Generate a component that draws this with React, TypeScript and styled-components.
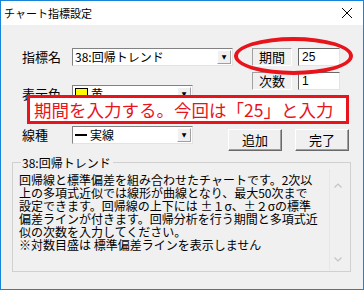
import React from 'react';
import styled, { createGlobalStyle } from 'styled-components';

const GlobalStyle = createGlobalStyle`
    html, body {
        margin: 0;
        padding: 0;
        background: #ffffff;
    }
    body {
        font-family: "Noto Sans CJK JP", "DejaVu Sans", sans-serif;
        color: #000;
    }
`;

const descLines = [
    '回帰線と標準偏差を組み合わせたチャートです。2次以',
    '上の多項式近似では線形が曲線となり、最大50次まで',
    '設定できます。回帰線の上下には ±１σ、±２σの標準',
    '偏差ラインが付きます。回帰分析を行う期間と多項式近',
    '似の次数を入力してください。',
    '※対数目盛は 標準偏差ラインを表示しません',
];

export default function App() {
    return (
        <>
            <GlobalStyle />
            <Window lang="ja">
                <TitleBar>
                    <span>チャート指標設定</span>
                    <CloseIcon width="12" height="12" viewBox="0 0 12 12">
                        <path d="M1 1 L11 11 M11 1 L1 11" stroke="#000" strokeWidth="1" />
                    </CloseIcon>
                </TitleBar>

                <Body>
                    <TopBand>
                        <LeftCol>
                            <FieldRow>
                                <Label>指標名</Label>
                                <Combo $width={161}>
                                    <ComboText>38:回帰トレンド</ComboText>
                                    <DropButton>▼</DropButton>
                                </Combo>
                            </FieldRow>
                            <FieldRow $gap={19}>
                                <Label>表示色</Label>
                                <Combo $width={121}>
                                    <ComboText>
                                        <Swatch />黄
                                    </ComboText>
                                    <DropButton>▼</DropButton>
                                </Combo>
                            </FieldRow>
                        </LeftCol>
                        <RightCol>
                            <FieldRow>
                                <StaticBox>期間</StaticBox>
                                <TextBox>25</TextBox>
                            </FieldRow>
                            <FieldRow $gap={6}>
                                <StaticBox>次数</StaticBox>
                                <TextBox>1</TextBox>
                            </FieldRow>
                        </RightCol>
                    </TopBand>

                    <MidBand>
                        <FieldRow>
                            <Label>線種</Label>
                            <Combo $width={121}>
                                <ComboText>
                                    <LineSample />実線
                                </ComboText>
                                <DropButton>▼</DropButton>
                            </Combo>
                        </FieldRow>
                        <Buttons>
                            <PushButton>追加</PushButton>
                            <PushButton>完了</PushButton>
                        </Buttons>
                    </MidBand>

                    <Group>
                        <Legend>38:回帰トレンド</Legend>
                        <DescArea>
                            <DescText>
                                {descLines.map((l, i) => (
                                    <div key={i}>{l}</div>
                                ))}
                            </DescText>
                            <ScrollTrack>
                                <Chevron viewBox="0 0 8 5" width="8" height="5">
                                    <path d="M0.5 4.5 L4 1 L7.5 4.5" fill="none" stroke="#c4c4c4" strokeWidth="1.2" />
                                </Chevron>
                                <Chevron viewBox="0 0 8 5" width="8" height="5">
                                    <path d="M0.5 0.5 L4 4 L7.5 0.5" fill="none" stroke="#c4c4c4" strokeWidth="1.2" />
                                </Chevron>
                            </ScrollTrack>
                        </DescArea>
                    </Group>

                    {/* annotation overlays */}
                    <Ellipse />
                    <Callout>期間を入力する。今回は「25」と入力</Callout>
                </Body>
            </Window>
        </>
    );
}

const Window = styled.div`
    position: relative;
    width: 364px;
    height: 290px;
    box-sizing: border-box;
    border: 1px solid #1883d7;
    display: flex;
    flex-direction: column;
    overflow: hidden;
`;

const TitleBar = styled.div`
    height: 24px;
    background: #ffffff;
    display: flex;
    align-items: center;
    justify-content: space-between;
    padding: 0 10px 0 3px;
    font-size: 11px;
    flex-shrink: 0;
`;

const CloseIcon = styled.svg`
    display: block;
`;

const Body = styled.div`
    position: relative;
    flex: 1;
    background: #f0f0f0;
    padding: 23px 0 0 21px;
    font-size: 13px;
`;

const TopBand = styled.div`
    display: flex;
    gap: 19px;
`;

const LeftCol = styled.div`
    display: flex;
    flex-direction: column;
`;

const RightCol = styled.div`
    display: flex;
    flex-direction: column;
`;

const FieldRow = styled.div<{ $gap?: number }>`
    display: flex;
    align-items: center;
    height: 18px;
    margin-top: ${(p) => p.$gap || 0}px;
    gap: 6px;
`;

const Label = styled.div`
    width: 44px;
    font-size: 13px;
    line-height: 18px;
    white-space: nowrap;
`;

const Combo = styled.div<{ $width: number }>`
    width: ${(p) => p.$width}px;
    height: 18px;
    box-sizing: border-box;
    background: #fff;
    border: 1px solid;
    border-color: #828282 #e3e3e3 #e3e3e3 #828282;
    display: flex;
    align-items: center;
    justify-content: space-between;
`;

const ComboText = styled.div`
    display: flex;
    align-items: center;
    gap: 3px;
    padding-left: 2px;
    font-size: 12px;
    line-height: 16px;
    white-space: nowrap;
`;

const DropButton = styled.div`
    width: 14px;
    height: 14px;
    box-sizing: border-box;
    margin-right: 1px;
    background: #f0f0f0;
    border: 1px solid;
    border-color: #ffffff #a0a0a0 #a0a0a0 #ffffff;
    font-size: 6px;
    line-height: 12px;
    text-align: center;
    font-family: "DejaVu Sans", sans-serif;
`;

const Swatch = styled.span`
    display: inline-block;
    width: 11px;
    height: 11px;
    background: #ffff00;
    border: 1px solid #000;
`;

const LineSample = styled.span`
    display: inline-block;
    width: 12px;
    height: 2px;
    background: #000;
`;

const StaticBox = styled.div`
    width: 40px;
    height: 18px;
    box-sizing: border-box;
    border: 1px solid;
    border-color: #a0a0a0 #ffffff #ffffff #a0a0a0;
    text-align: center;
    font-size: 13px;
    line-height: 16px;
`;

const TextBox = styled.div`
    width: 42px;
    height: 18px;
    box-sizing: border-box;
    background: #fff;
    border: 1px solid;
    border-color: #696969 #e3e3e3 #e3e3e3 #696969;
    padding-left: 3px;
    font-family: "Liberation Sans", sans-serif;
    font-size: 12px;
    line-height: 16px;
`;

const MidBand = styled.div`
    display: flex;
    align-items: flex-start;
    gap: 35px;
    margin-top: 23px;
`;

const Buttons = styled.div`
    display: flex;
    gap: 13px;
    margin-top: 3px;
`;

const PushButton = styled.div`
    width: 54px;
    height: 22px;
    box-sizing: border-box;
    background: #f0f0f0;
    border: 1px solid;
    border-color: #ffffff #696969 #696969 #ffffff;
    box-shadow: inset -1px -1px 0 #a0a0a0;
    text-align: center;
    font-size: 13px;
    line-height: 20px;
`;

const Group = styled.fieldset`
    margin: 5px 0 0 -10px;
    width: 339px;
    height: 116px;
    box-sizing: border-box;
    border: 1px solid #d0d0d0;
    border-radius: 0;
    padding: 0 4px 3px 6px;
`;

const Legend = styled.legend`
    padding: 0 2px 0 1px;
    margin-left: 2px;
    font-size: 12px;
    line-height: 13px;
`;

const DescArea = styled.div`
    display: flex;
    height: 101px;
`;

const DescText = styled.div`
    flex: 1;
    padding-top: 4px;
    font-size: 12px;
    line-height: 13px;
    white-space: nowrap;
    overflow: hidden;
`;

const ScrollTrack = styled.div`
    width: 16px;
    border-left: 1px solid #e6e6e6;
    display: flex;
    flex-direction: column;
    align-items: center;
    justify-content: space-between;
    padding: 14px 0 8px;
`;

const Chevron = styled.svg`
    display: block;
`;

const Ellipse = styled.div`
    position: absolute;
    left: 233px;
    top: 12px;
    width: 119px;
    height: 38px;
    box-sizing: border-box;
    border: 4px solid #e8141c;
    border-radius: 50%;
`;

const Callout = styled.div`
    position: absolute;
    left: 26px;
    top: 70px;
    width: 322px;
    height: 29px;
    box-sizing: border-box;
    border: 3px solid #e8141c;
    background: #ffffff;
    color: #e8141c;
    font-size: 17.5px;
    line-height: 23px;
    padding-left: 4px;
    white-space: nowrap;
`;
